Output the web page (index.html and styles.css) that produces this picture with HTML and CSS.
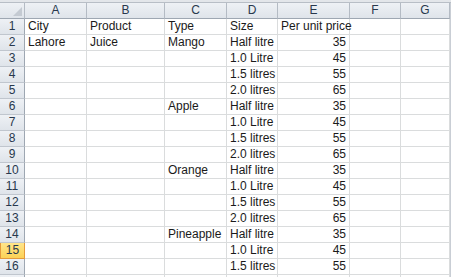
FILE: index.html
```html
<!DOCTYPE html>
<html lang="en">
  <head>
    <meta charset="UTF-8" />
    <meta name="viewport" content="width=device-width, initial-scale=1.0" />
    <title>Juice prices</title>
    <link rel="stylesheet" href="styles.css">
  </head>
  <body>
    <div class="top-band"></div>
    <div class="sheet" id="sheet"></div>

    <script>
      document.addEventListener("DOMContentLoaded", () => {
        const sheet = document.getElementById("sheet");
        const cols = ["A", "B", "C", "D", "E", "F", "G"];
        const rows = [
          ["City", "Product", "Type", "Size", "Per unit price"],
          ["Lahore", "Juice", "Mango", "Half litre", 35],
          ["", "", "", "1.0 Litre", 45],
          ["", "", "", "1.5 litres", 55],
          ["", "", "", "2.0 litres", 65],
          ["", "", "Apple", "Half litre", 35],
          ["", "", "", "1.0 Litre", 45],
          ["", "", "", "1.5 litres", 55],
          ["", "", "", "2.0 litres", 65],
          ["", "", "Orange", "Half litre", 35],
          ["", "", "", "1.0 Litre", 45],
          ["", "", "", "1.5 litres", 55],
          ["", "", "", "2.0 litres", 65],
          ["", "", "Pineapple", "Half litre", 35],
          ["", "", "", "1.0 Litre", 45],
          ["", "", "", "1.5 litres", 55],
          []
        ];

        function cell(cls, text) {
          const div = document.createElement("div");
          div.className = cls;
          div.textContent = text;
          sheet.appendChild(div);
        }

        cell("corner", "");
        cols.forEach((c) => cell("col-head", c));

        rows.forEach((row, i) => {
          // last row only peeks in at the bottom edge, so no label
          const label = row.length ? i + 1 : "";
          cell(i + 1 === 15 ? "row-head selected" : "row-head", label);
          cols.forEach((c, j) => {
            const value = row[j] === undefined ? "" : row[j];
            cell(typeof value === "number" ? "cell num" : "cell", value);
          });
        });
      });
    </script>
  </body>
</html>
```

FILE: styles.css
```css
body {
  margin: 0;
  width: 451px;
  height: 277px;
  overflow: hidden;
  background: #fff;
  font-family: "Liberation Sans", Arial, sans-serif;
  font-size: 12px;
  color: #1a1a1a;
}

.top-band {
  height: 2px;
  background: #e3e6ea;
  border-bottom: 1px solid #b8bec6;
}

.sheet {
  display: grid;
  grid-template-columns: 25px 62px 78px 62px 51px 72px 51px 49px;
  grid-auto-rows: 16px;
  width: 449px;
  border-right: 2px solid #c9ced5;
}

.sheet > div {
  box-sizing: border-box;
  white-space: nowrap;
  line-height: 15px;
}

.corner,
.col-head,
.row-head {
  background: linear-gradient(#eef1f5, #dfe4ea);
  color: #28384d;
  border-right: 1px solid #b4bbc4;
  border-bottom: 1px solid #9ea7b2;
  text-align: center;
}

.corner {
  position: relative;
}

.corner::after {
  content: "";
  position: absolute;
  right: 2px;
  bottom: 2px;
  border-left: 9px solid transparent;
  border-bottom: 9px solid #c4cad2;
}

.row-head {
  border-right-color: #9ea7b2;
  border-bottom-color: #c0c6ce;
}

.row-head.selected {
  background: linear-gradient(#ffe58a, #fcd257);
  border: 1px solid #e49a3b;
  border-top: none;
}

.cell {
  border-right: 1px solid #dadcdd;
  border-bottom: 1px solid #dadcdd;
  padding: 0 3px;
  overflow: visible;
  position: relative;
}

.cell.num {
  text-align: right;
}
```
